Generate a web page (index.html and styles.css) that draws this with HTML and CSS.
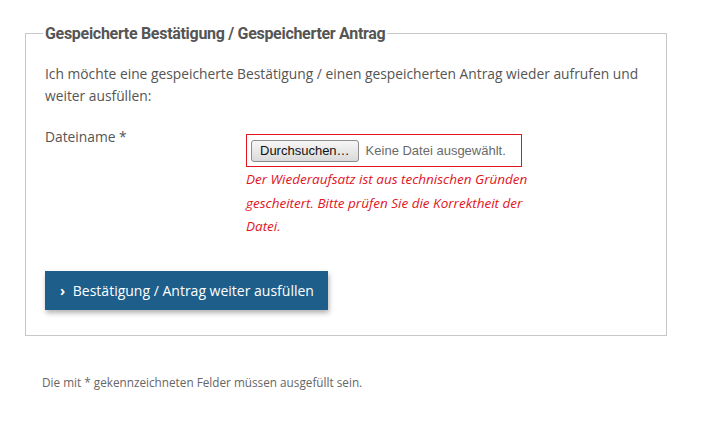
FILE: index.html
```html
<!DOCTYPE html>
<html>
<head>
  <title>Gespeicherte Bestätigung</title>
  <link rel="stylesheet" href="styles.css">
</head>
<body>
  <form id="restore-form">
    <fieldset class="restore-box">
      <legend>Gespeicherte Bestätigung / Gespeicherter Antrag</legend>
      <p class="intro">Ich möchte eine gespeicherte Bestätigung / einen gespeicherten Antrag wieder aufrufen und weiter ausfüllen:</p>

      <div class="field-row">
        <label class="field-label" for="datei">Dateiname *</label>
        <div class="field-input">
          <div class="file-box">
            <span class="file-button">Durchsuchen…</span>
            <span class="file-name">Keine Datei ausgewählt.</span>
          </div>
          <div class="field-error">Der Wiederaufsatz ist aus technischen Gründen gescheitert. Bitte prüfen Sie die Korrektheit der Datei.</div>
        </div>
      </div>

      <button type="button" class="submit-button"><span class="chevron">&#x203A;</span> Bestätigung / Antrag weiter ausfüllen</button>
    </fieldset>
  </form>

  <p class="required-note">Die mit * gekennzeichneten Felder müssen ausgefüllt sein.</p>
</body>
</html>
```

FILE: styles.css
```css
body {
  margin: 0;
  padding: 0;
  background-color: #fff;
  font-family: "Open Sans", "DejaVu Sans", sans-serif;
  color: #555;
}

#restore-form {
  padding: 24px 0 0 25px;
  width: 642px;
}

.restore-box {
  margin: 0;
  padding: 20px 20px 25px 19px;
  border: 1px solid #c8c8c8;
}

.restore-box legend {
  padding: 0 2px;
  margin-left: -2px;
  font-family: Roboto, "DejaVu Sans Condensed", sans-serif;
  font-weight: bold;
  font-size: 16px;
  letter-spacing: -0.3px;
  color: #555;
}

.intro {
  margin: 0 0 27px 0;
  font-size: 13.8px;
  line-height: 22px;
}

.field-row {
  display: flex;
  font-size: 13.8px;
}

.field-label {
  width: 201px;
  line-height: 22px;
  margin-top: -8px;
}

.file-box {
  display: flex;
  align-items: center;
  width: 276px;
  height: 33px;
  border: 1px solid #e2141e;
  box-sizing: border-box;
  padding-left: 4px;
  white-space: nowrap;
  font-family: "Liberation Sans", Arial, sans-serif;
  font-size: 13px;
}

.file-button {
  display: inline-block;
  height: 22px;
  line-height: 20px;
  box-sizing: border-box;
  padding: 0 8px;
  border: 1px solid #8c8c8c;
  border-radius: 3px;
  background: linear-gradient(#f6f6f6, #dadada);
  color: #111;
}

.file-name {
  margin-left: 7px;
  color: #6a6a6a;
}

.field-error {
  width: 300px;
  margin-top: 1px;
  font-style: italic;
  font-size: 13.5px;
  line-height: 23.5px;
  color: #e2141e;
}

.submit-button {
  margin-top: 32px;
  padding: 0 14px 0 15px;
  height: 39px;
  background-color: #1d5e8b;
  color: #fff;
  border: none;
  font-family: "Open Sans", "DejaVu Sans", sans-serif;
  font-size: 14px;
  box-shadow: 1px 3px 5px rgba(0, 0, 0, 0.3);
  cursor: pointer;
}

.chevron {
  font-weight: bold;
  margin-right: 4px;
}

.required-note {
  margin: 38px 0 0 42px;
  font-size: 11.75px;
  color: #666;
}
```
